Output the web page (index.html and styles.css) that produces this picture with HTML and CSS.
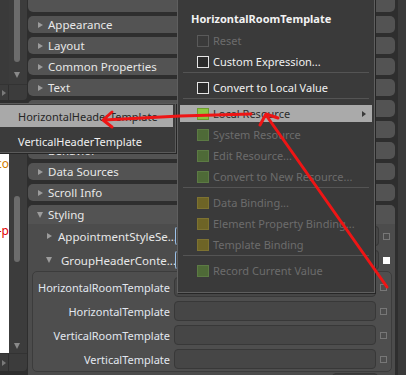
FILE: index.html
```html
<!doctype html>
<html lang="en">
<head>
    <meta charset="UTF-8">
    <meta name="viewport" content="width=device-width, initial-scale=1.0">
    <link rel="stylesheet" href="styles.css">
    <title>Properties - context menu</title>
</head>
<body>
<div class="workspace">
    <aside class="side">
        <div class="pane pane-top">
            <div class="pane-body">
                <div class="pane-content"></div>
                <div class="vbar">
                    <span class="thumb thumb-top"></span>
                    <span class="down-arrow arrow-top"></span>
                </div>
            </div>
            <div class="pane-foot">
                <span class="foot-cell"><span class="foot-arrow"></span></span>
                <span class="foot-cell foot-wide"></span>
            </div>
        </div>
        <div class="pane pane-bottom">
            <div class="pane-body">
                <div class="code">
                    <div class="code-line code-orange">co</div>
                    <div class="code-line"></div>
                    <div class="code-line"></div>
                    <div class="code-line"></div>
                    <div class="code-line code-red">-p</div>
                </div>
                <div class="vbar">
                    <span class="thumb thumb-bottom"></span>
                    <span class="down-arrow arrow-bottom"></span>
                </div>
            </div>
            <div class="pane-foot pane-foot-low">
                <span class="foot-cell"><span class="foot-arrow"></span></span>
                <span class="foot-cell foot-wide"></span>
            </div>
        </div>
    </aside>

    <main class="props">
        <div class="cat"></div>
        <div class="cat"><span class="tri"></span>Appearance</div>
        <div class="cat"><span class="tri"></span>Layout</div>
        <div class="cat"><span class="tri"></span>Common Properties</div>
        <div class="cat"><span class="tri"></span>Text</div>
        <div class="cat"></div>
        <div class="cat"></div>
        <div class="cat"><span class="tri"></span>Behavior</div>
        <div class="cat"><span class="tri"></span>Data Sources</div>
        <div class="cat"><span class="tri"></span>Scroll Info</div>
        <div class="cat-open">
            <div class="cat-head"><span class="tri tri-down"></span>Styling</div>
            <div class="prop-row">
                <div class="prop-name"><span class="tri"></span>AppointmentStyleSe...</div>
                <div class="value value-bound"></div>
                <span class="marker"></span>
            </div>
            <div class="prop-row">
                <div class="prop-name prop-name-open"><span class="tri tri-down"></span>GroupHeaderConte...</div>
                <div class="value value-bound"></div>
                <span class="marker marker-set"></span>
            </div>
            <div class="subpanel">
                <div class="sub-row">
                    <div class="sub-label">HorizontalRoomTemplate</div>
                    <div class="value sub-value"></div>
                    <span class="marker"></span>
                </div>
                <div class="sub-row">
                    <div class="sub-label">HorizontalTemplate</div>
                    <div class="value sub-value"></div>
                    <span class="marker"></span>
                </div>
                <div class="sub-row">
                    <div class="sub-label">VerticalRoomTemplate</div>
                    <div class="value sub-value"></div>
                    <span class="marker"></span>
                </div>
                <div class="sub-row">
                    <div class="sub-label">VerticalTemplate</div>
                    <div class="value sub-value"></div>
                    <span class="marker"></span>
                </div>
            </div>
            <div class="next-row">
                <div class="value next-value"></div>
            </div>
        </div>
    </main>

    <div class="edge"></div>
</div>

<ul class="submenu">
    <li class="sub-item active">HorizontalHeaderTemplate</li>
    <li class="sub-item">VerticalHeaderTemplate</li>
</ul>

<div class="menu">
    <div class="menu-title">HorizontalRoomTemplate</div>
    <div class="mi disabled"><span class="box"></span>Reset</div>
    <div class="mi"><span class="box box-plain"></span>Custom Expression...</div>
    <div class="sep"></div>
    <div class="mi"><span class="box box-plain"></span>Convert to Local Value</div>
    <div class="sep"></div>
    <div class="mi active"><span class="box box-green"></span>Local Resource<span class="sub-arrow"></span></div>
    <div class="mi disabled"><span class="box box-resource"></span>System Resource</div>
    <div class="mi disabled"><span class="box box-resource"></span>Edit Resource...</div>
    <div class="mi disabled"><span class="box box-resource"></span>Convert to New Resource...</div>
    <div class="sep"></div>
    <div class="mi disabled"><span class="box box-binding"></span>Data Binding...</div>
    <div class="mi disabled"><span class="box box-binding"></span>Element Property Binding...</div>
    <div class="mi disabled"><span class="box box-binding"></span>Template Binding</div>
    <div class="sep"></div>
    <div class="mi disabled"><span class="box box-resource"></span>Record Current Value</div>
</div>

<svg class="marks" viewBox="0 0 406 375" width="406" height="375">
    <g fill="none" stroke="#ee1515" stroke-width="3" stroke-linecap="round" stroke-linejoin="round">
        <path d="M387 287 L266 115"/>
        <path d="M260 125 L266 114 L278 118"/>
        <path d="M251 114 L180 116 L104 120"/>
        <path d="M112 112 L103 120 L112 127"/>
    </g>
</svg>
</body>
</html>
```

FILE: styles.css
```css
* {
    box-sizing: border-box;
}

body {
    position: relative;
    width: 406px;
    height: 375px;
    margin: 0;
    overflow: hidden;
    background: #2e2e2e;
    color: #e8e8e8;
    font-family: 'Noto Sans', 'Open Sans', sans-serif;
    font-size: 11.5px;
}

.workspace {
    display: flex;
    height: 375px;
}

/* left panels */
.side {
    display: flex;
    flex-direction: column;
    gap: 4px;
    width: 27px;
    flex: none;
}

.pane {
    display: flex;
    flex-direction: column;
    background: #3c3c3c;
    border-radius: 0 0 4px 0;
    overflow: hidden;
}

.pane-top {
    height: 100px;
}

.pane-bottom {
    height: 267px;
}

.pane-body {
    display: flex;
    flex: 1;
}

.pane-content {
    width: 9px;
    background: #3a3a3a;
}

.vbar {
    display: flex;
    flex-direction: column;
    flex: 1;
    padding-left: 5px;
}

.thumb {
    width: 6px;
    background: #6c6c6c;
    border-radius: 3px;
}

.thumb-top {
    height: 62px;
    border-radius: 0 0 3px 3px;
}

.thumb-bottom {
    height: 66px;
    margin-top: 92px;
}

.down-arrow {
    width: 0;
    height: 0;
    border-top: 6px solid #8a8a8a;
    border-left: 3px solid transparent;
    border-right: 3px solid transparent;
}

.arrow-top {
    margin-top: 10px;
}

.arrow-bottom {
    margin-top: 81px;
}

.pane-foot {
    display: flex;
    height: 16px;
    border-top: 1px solid #333;
}

.pane-foot-low {
    height: 18px;
}

.foot-cell {
    display: flex;
    align-items: center;
    width: 9px;
    border-right: 1px solid #2f2f2f;
}

.foot-wide {
    flex: 1;
    border-right: 0;
}

.foot-arrow {
    width: 0;
    height: 0;
    margin-left: 2px;
    border-left: 4px solid #7a7a7a;
    border-top: 3px solid transparent;
    border-bottom: 3px solid transparent;
}

.code {
    width: 9px;
    padding-top: 52px;
    overflow: hidden;
    background: #fff;
    font-size: 12px;
    line-height: 16.75px;
}

.code-line {
    display: flex;
    justify-content: flex-end;
    height: 16.75px;
    white-space: nowrap;
}

.code-orange {
    color: #d07a00;
}

.code-red {
    color: #e00000;
}

/* property categories */
.props {
    display: flex;
    flex-direction: column;
    gap: 4px;
    width: 367px;
    margin: -5px 0 0 1px;
    flex: none;
}

.cat {
    display: flex;
    align-items: center;
    gap: 5px;
    height: 17px;
    padding-left: 10px;
    flex: none;
    background: #535353;
    border-radius: 5px;
}

.tri {
    width: 0;
    height: 0;
    flex: none;
    border-left: 5px solid #9c9c9c;
    border-top: 3.5px solid transparent;
    border-bottom: 3.5px solid transparent;
}

.tri-down {
    border-left: 3.5px solid transparent;
    border-right: 3.5px solid transparent;
    border-top: 6px solid #9c9c9c;
    border-bottom: 0;
}

.cat-open {
    flex: 1;
    background: #4c4c4c;
    border-radius: 5px 5px 0 0;
}

.cat-head {
    display: flex;
    align-items: center;
    gap: 5px;
    height: 19px;
    padding-left: 9px;
    background: #535353;
    border-radius: 5px 5px 0 0;
}

.prop-row {
    display: flex;
    align-items: center;
    height: 24px;
}

.prop-name {
    display: flex;
    align-items: center;
    gap: 6px;
    width: 147px;
    padding-left: 19px;
    white-space: nowrap;
}

.prop-name-open {
    gap: 9px;
    padding-left: 18px;
}

.value {
    height: 20px;
    background: #464646;
    border: 1px solid #383838;
    border-radius: 4px;
}

.value-bound {
    width: 204px;
    border-left-color: #9cc2ea;
}

.marker {
    width: 7px;
    height: 7px;
    margin-left: 4px;
    border: 1px solid #777;
}

.marker-set {
    background: #fff;
    border-color: #fff;
}

.subpanel {
    margin: -1px 3px 0 4px;
    padding-top: 3px;
    background: #4e4e4e;
    border: 1px solid #3c3c3c;
    border-radius: 5px;
    font-size: 11px;
}

.sub-row {
    display: flex;
    align-items: center;
    height: 24px;
}

.sub-label {
    width: 137px;
    text-align: right;
    white-space: nowrap;
    color: #e2e7ef;
}

.sub-value {
    width: 202px;
    margin-left: 4px;
}

.next-row {
    display: flex;
    padding: 1px 0 0 304px;
}

.next-value {
    width: 46px;
    background: #3e3e3e;
}

.edge {
    flex: 1;
    margin-left: 3px;
    background: #3a3a3a;
}

/* popups */
.submenu {
    position: absolute;
    left: -1px;
    top: 103px;
    width: 177px;
    margin: 0;
    padding: 1px 0 0;
    list-style: none;
    background: #3b3b3b;
    border: 1px solid #5a5a5a;
    box-shadow: 1px 1px 0 #262626;
    font-size: 11px;
}

.sub-item {
    display: flex;
    align-items: center;
    height: 22px;
    margin: 0 2px 3px 0;
    padding-left: 18px;
    color: #f0f0f0;
}

.sub-item:last-child {
    margin-bottom: 0;
}

.sub-item.active {
    background: #a9a9a9;
    color: #262626;
}

.menu {
    position: absolute;
    left: 177px;
    top: -2px;
    width: 198px;
    display: flex;
    flex-direction: column;
    padding-bottom: 11px;
    background: #3a3a3a;
    border: 1px solid #5f5f5f;
    box-shadow: 1px 1px 0 #262626;
    font-size: 11px;
}

.menu-title {
    height: 31px;
    padding: 13px 0 0 13px;
    line-height: 14px;
    font-weight: bold;
    color: #f2f2f2;
}

.mi {
    display: flex;
    align-items: center;
    height: 17px;
    margin: 2px 2px;
    padding-left: 17px;
    color: #f0f0f0;
}

.mi.disabled {
    color: #6c6c6c;
}

.mi.active {
    background: #aaaaaa;
    color: #2a2a2a;
}

.box {
    width: 12px;
    height: 12px;
    margin-right: 4px;
    flex: none;
    border: 1px solid #5a5a5a;
}

.box-plain {
    background: #2c2c2c;
    border-color: #e6e6e6;
}

.box-green {
    background: #8cc63f;
    border-color: #6d9c2e;
}

.box-resource {
    background: #4e6a37;
    border-color: #5c7a44;
}

.box-binding {
    background: #6e6426;
    border-color: #7d7231;
}

.sub-arrow {
    width: 0;
    height: 0;
    margin: 0 6px 0 auto;
    border-left: 4px solid #3a3a3a;
    border-top: 3.5px solid transparent;
    border-bottom: 3.5px solid transparent;
}

.sep {
    height: 1px;
    margin: 0 5px 4px;
    flex: none;
    background: #545454;
}

.marks {
    position: absolute;
    left: 0;
    top: 0;
    pointer-events: none;
}
```
